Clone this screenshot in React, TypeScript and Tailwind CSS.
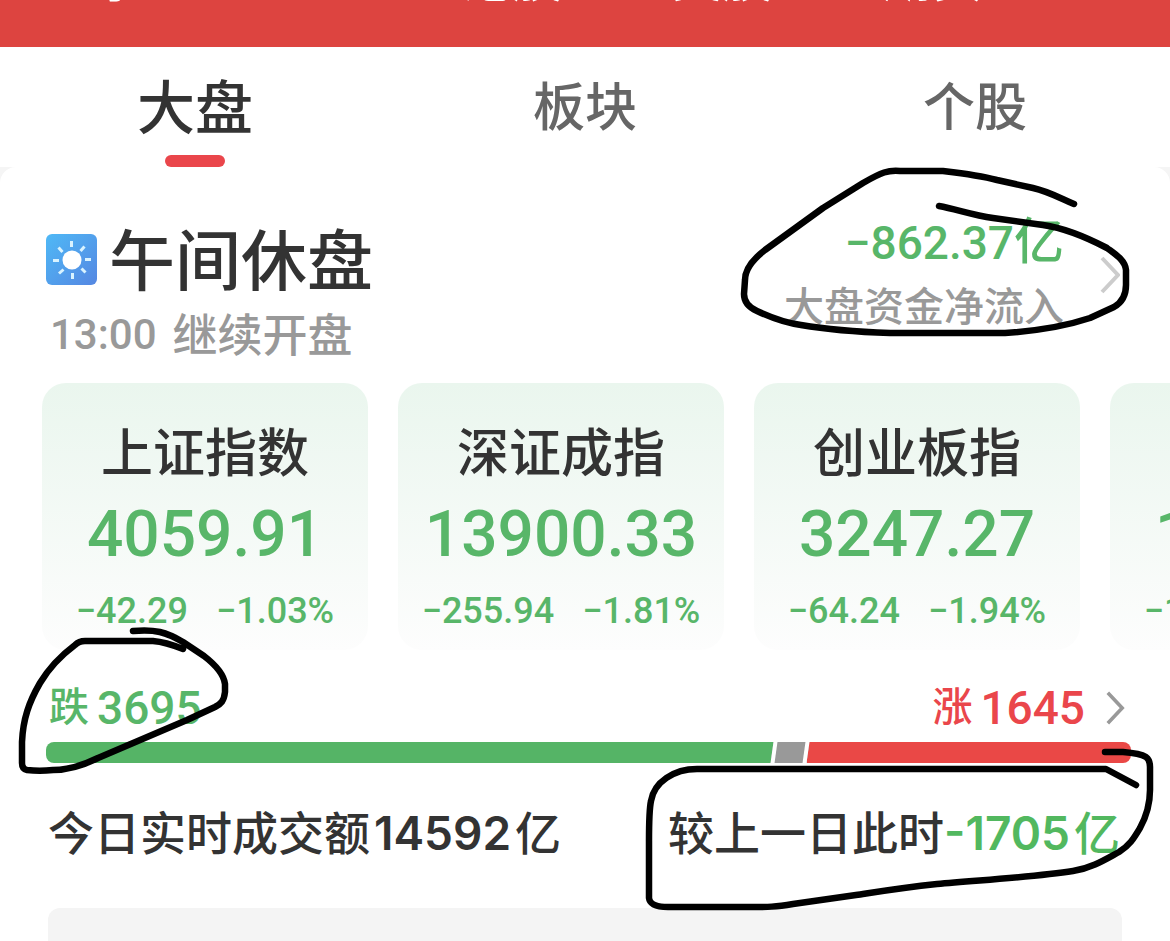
import { useState } from 'react';
import clsx from 'clsx';

interface IndexQuote {
  name: string;
  price: string;
  change: string;
  percent: string;
}

const markets = ['港股', '美股', '期货'];

const tabs = ['大盘', '板块', '个股'];

const quotes: IndexQuote[] = [
  { name: '上证指数', price: '4059.91', change: '−42.29', percent: '−1.03%' },
  { name: '深证成指', price: '13900.33', change: '−255.94', percent: '−1.81%' },
  { name: '创业板指', price: '3247.27', change: '−64.24', percent: '−1.94%' },
  { name: '科创50', price: '1456.02', change: '−19.35', percent: '−1.31%' },
];

const breadth = { down: 3695, flat: 144, up: 1645 };

function SunIcon() {
  return (
    <svg viewBox="0 0 51 51" className="h-[51px] w-[51px] shrink-0" aria-hidden="true">
      <defs>
        <linearGradient id="sky" x1="0" y1="0" x2="1" y2="1">
          <stop offset="0" stopColor="#4fb9f6" />
          <stop offset="1" stopColor="#5587e2" />
        </linearGradient>
      </defs>
      <rect width="51" height="51" rx="6" fill="url(#sky)" />
      <circle cx="26" cy="26" r="9.5" fill="#fff" />
      <g stroke="#d9f3ff" strokeWidth="3">
        <path d="M25.5 7v6M26.5 39v6M7 26.500h6M39 25.500h6" />
        <path d="M12.500 13.500l4 4.500M38.500 12.500l-4 4.500M13 39.500l4.500-4M39.500 38.500l-4-4" />
      </g>
    </svg>
  );
}

function Chevron({ className }: { className: string }) {
  return (
    <svg
      viewBox="0 0 20 40"
      className={clsx('w-5 shrink-0', className)}
      fill="none"
      stroke="currentColor"
      strokeWidth="4"
      aria-hidden="true"
    >
      <path d="M2 3l16 17L2 37" />
    </svg>
  );
}

function PenMark({ viewBox, d, className }: { viewBox: string; d: string; className: string }) {
  return (
    <svg
      viewBox={viewBox}
      className={clsx('pointer-events-none absolute', className)}
      fill="none"
      stroke="#000"
      strokeWidth="6.5"
      strokeLinecap="round"
      strokeLinejoin="round"
      aria-hidden="true"
    >
      <path d={d} />
    </svg>
  );
}

function QuoteCard({ quote }: { quote: IndexQuote }) {
  return (
    <article className="flex h-[267px] w-[326px] shrink-0 flex-col items-center rounded-3xl bg-linear-to-b from-[#eaf6ee] to-[#fdfdfd] pt-10 whitespace-nowrap">
      <h2 className="text-[52px] leading-[64px] font-medium text-[#333]">{quote.name}</h2>
      <p className="mt-2 text-[64px] leading-[80px] font-medium">{quote.price}</p>
      <p className="mt-3 flex gap-7 text-[36px] leading-[48px] font-medium">
        <span>{quote.change}</span>
        <span>{quote.percent}</span>
      </p>
    </article>
  );
}

export default function App() {
  const [active, setActive] = useState('大盘');

  return (
    <main className="relative overflow-hidden bg-[#f5f5f5] font-[Roboto,'Noto_Sans_CJK_SC',sans-serif] text-[#333]">
      <header className="h-[47px] overflow-hidden bg-[#dd4440] text-[50px] leading-[50px] text-white">
        <nav className="-mt-[45px] flex justify-between pr-[188px] pl-[94px]">
          <a href="#jing">京</a>
          <div className="flex gap-[110px]">
            {markets.map((m) => (
              <a key={m} href={`#${m}`}>
                {m}
              </a>
            ))}
          </div>
        </nav>
      </header>

      <div className="grid h-[120px] grid-cols-3 bg-white" role="tablist">
        {tabs.map((tab) => (
          <button
            key={tab}
            role="tab"
            aria-selected={tab === active}
            onClick={() => setActive(tab)}
            className={clsx(
              'flex flex-col items-center justify-end font-medium',
              tab === active ? 'text-[58px] text-[#333]' : 'text-[52px] text-[#666]',
            )}
          >
            <span className="leading-[72px]">{tab}</span>
            <span className={clsx('mt-[10px] h-3 w-15 rounded-full', tab === active && 'bg-[#ea464b]')} />
          </button>
        ))}
      </div>

      <section className="rounded-t-2xl bg-white pt-[50px]">
        {/* Session status and net flow */}
        <div className="flex justify-between pr-[50px] pl-[46px]">
          <div>
            <div className="flex items-center gap-3">
              <SunIcon />
              <h1 className="pt-2 text-[66px] leading-[76px] font-medium">午间休盘</h1>
            </div>
            <p className="mt-[10px] flex gap-4 pl-1 font-medium text-[#999]">
              <span className="text-[42px] leading-[48px]">13:00</span>
              <span className="text-[45px] leading-[52px]">继续开盘</span>
            </p>
          </div>
          <a href="#flow" className="flex items-center gap-9 self-start">
            <span className="text-right font-medium">
              <span className="block text-[46px] leading-[50px] text-[#58b669]">
                −862.37<span className="text-[50px]">亿</span>
              </span>
              <span className="mt-4 block text-[40px] leading-[48px] text-[#999]">大盘资金净流入</span>
            </span>
            <Chevron className="h-10 text-[#ccc]" />
          </a>
        </div>

        {/* Index cards */}
        <div className="mt-5 flex gap-[30px] overflow-hidden pl-[42px] text-[#58b669]">
          {quotes.map((q) => (
            <QuoteCard key={q.name} quote={q} />
          ))}
        </div>

        {/* Falling / rising */}
        <div className="mt-8 pr-[39px] pl-[46px]">
          <a href="#breadth" className="flex items-center justify-between text-[46px] leading-[52px] font-medium">
            <span className="flex items-center gap-2 pl-[3px] text-[#58b669]">
              <span className="text-[40px]">跌</span>
              {breadth.down}
            </span>
            <span className="flex items-center gap-2 pr-[6px] text-[#ea464b]">
              <span className="text-[40px]">涨</span>
              {breadth.up}
              <Chevron className="ml-3 h-9 text-[#999]" />
            </span>
          </a>
          <div className="mt-2 flex h-[21px] overflow-hidden rounded-lg">
            <div className="bg-[#55b466]" style={{ flexGrow: breadth.down }} />
            <div
              className="-mx-0.5 -skew-x-8 border-x-4 border-white bg-[#999]"
              style={{ flexGrow: breadth.flat }}
            />
            <div className="bg-[#ea4846]" style={{ flexGrow: breadth.up }} />
          </div>
        </div>

        {/* Turnover */}
        <div className="mt-[42px] flex justify-between pr-[50px] pl-12 font-[Inter,'Noto_Sans_CJK_SC',sans-serif] text-[46px] leading-[56px] font-medium">
          <p className="flex gap-1">
            今日实时成交额<span className="font-semibold">14592</span>
            <span>亿</span>
          </p>
          <p className="flex">
            较上一日此时
            <span className="flex gap-1 text-[#52b85f]">
              <span className="font-semibold">-1705</span>
              <span>亿</span>
            </span>
          </p>
        </div>

        <div className="mx-12 mt-[47px] h-[33px] rounded-t-xl bg-[#f4f4f4]" />
      </section>

      <PenMark
        className="top-[160px] right-[30px] h-[180px] w-[410px]"
        viewBox="730 160 410 180"
        d="M1074 204C1058 197 1047 191 1033 188L997 180C978 175 960 173 943 171H900C888 170 882 172 863 183L823 208L765 250C752 260 745 269 745 280L744 294C744 302 748 307 757 311C772 318 786 323 801 325C830 330 860 332 890 333H1005C1035 331 1066 326 1090 318L1114 307C1121 303 1126 296 1126 285V270C1125 260 1115 254 1107 248C1084 236 1064 228 1043 225L993 218C972 215 956 209 939 206"
      />
      <PenMark
        className="top-[620px] left-[10px] h-[160px] w-[230px]"
        viewBox="10 620 230 160"
        d="M133 631C155 629 166 632 183 642L204 656C217 666 224 676 225 684V692C224 701 221 704 215 707L187 720L98 758C82 766 68 770 53 770C44 771 35 771 27 770Q22 769 22 763V742C23 719 29 702 40 683C49 668 63 654 75 645Q79 641 85 641H153C165 642 173 645 183 649"
      />
      <PenMark
        className="top-[745px] right-[10px] h-[170px] w-[520px]"
        viewBox="640 745 520 170"
        d="M1105 752H1123C1135 753 1141 754 1146 757Q1150 760 1150 767V790C1150 806 1146 817 1140 828C1134 838 1130 845 1119 852C1106 859 1092 868 1073 871C1035 877 980 880 937 884C900 888 876 892 856 895L793 904C775 907 768 907 752 907H668Q650 907 649 898V841C649 822 649 810 651 801C654 782 674 769 697 769H1106L1136 785"
      />
    </main>
  );
}
